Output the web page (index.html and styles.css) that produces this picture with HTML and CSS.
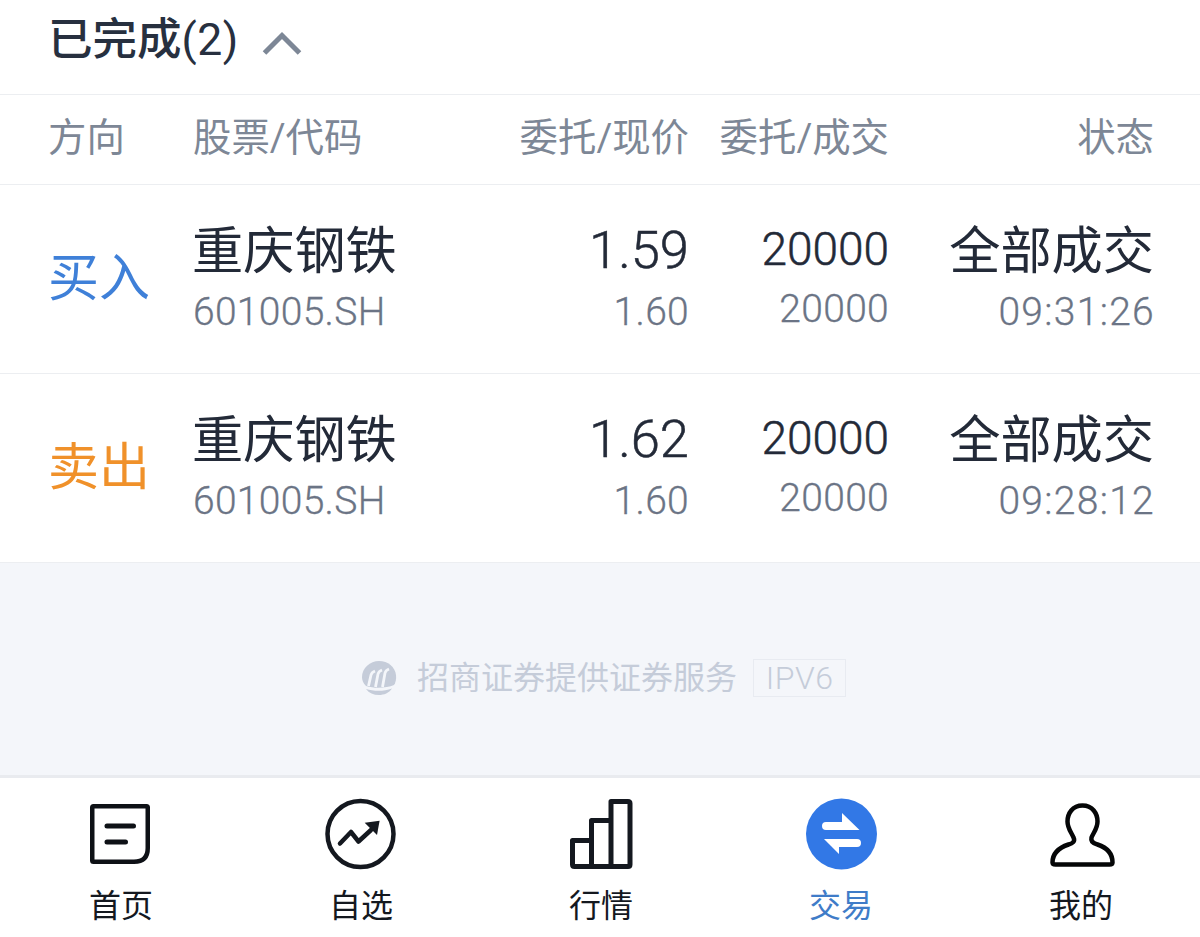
FILE: index.html
```html
<!DOCTYPE html>
<html lang="zh-CN">
<head>
<meta charset="utf-8">
<title>已完成</title>
<link rel="stylesheet" href="styles.css">
</head>
<body>
<div class="page">
  <main class="content">
    <header class="title-row">
      <h2 class="title">已完成<span class="count">(2)</span></h2>
      <svg class="chevron" viewBox="0 0 40 24" width="40" height="24"><path d="M2.500 22 L20 4.500 L37.500 22" fill="none" stroke="#7d8796" stroke-width="5"/></svg>
    </header>
    <div class="grid head-row">
      <span class="head-first">方向</span>
      <span>股票/代码</span>
      <span class="r">委托/现价</span>
      <span class="r">委托/成交</span>
      <span class="r">状态</span>
    </div>
    <div class="grid order-row">
      <div class="dir buy">买入</div>
      <div class="cell"><div class="name">重庆钢铁</div><div class="sub">601005.SH</div></div>
      <div class="cell r"><div class="price">1.59</div><div class="sub">1.60</div></div>
      <div class="cell r"><div class="qty">20000</div><div class="sub">20000</div></div>
      <div class="cell r"><div class="name">全部成交</div><div class="sub time">09:31:26</div></div>
    </div>
    <div class="grid order-row">
      <div class="dir sell">卖出</div>
      <div class="cell"><div class="name">重庆钢铁</div><div class="sub">601005.SH</div></div>
      <div class="cell r"><div class="price">1.62</div><div class="sub">1.60</div></div>
      <div class="cell r"><div class="qty">20000</div><div class="sub">20000</div></div>
      <div class="cell r"><div class="name">全部成交</div><div class="sub time">09:28:12</div></div>
    </div>
    <footer class="provider">
      <svg class="logo" viewBox="0 0 36 36" width="36" height="36">
        <path d="M18 1 C27 1 34 7 35 15 C35.500 19 34.500 23 33 25 C26 28 14 29 5 26 C2 23 1 20 1 17 C1 8 9 1 18 1 Z" fill="#c5ccd9"/>
        <path d="M5 29 C13 31.500 23 31.500 31 28.500 C28 33 23 35 18 35 C12.500 35 8 33 5 29 Z" fill="#c5ccd9"/>
        <path d="M7.500 26 L10 15 C10.500 13 11.500 12 14 11 M14.500 27 L17 14 C17.500 12 18.500 11 21 10 M21.500 27 L24 13 C24.500 11 25.500 10 28 9" fill="none" stroke="#f4f6fa" stroke-width="2.800"/>
      </svg>
      <span class="provider-text">招商证券提供证券服务</span>
      <span class="ipv">IPV6</span>
    </footer>
  </main>
  <nav class="tabs">
    <a class="tab">
      <svg viewBox="0 0 72 72" width="72" height="72"><path d="M7.250 9.500 Q7.250 8.250 8.500 8.250 H61.500 Q62.750 8.250 62.750 9.500 V50 Q62.750 63.750 49 63.750 H8.500 Q7.250 63.750 7.250 62.500 Z" fill="none" stroke="#0e1116" stroke-width="4.500"/><path d="M22 28 H48.500 M22 44 H40.500" stroke="#0e1116" stroke-width="5" stroke-linecap="round"/></svg>
      <span>首页</span>
    </a>
    <a class="tab">
      <svg viewBox="0 0 72 72" width="72" height="72"><circle cx="35.500" cy="36" r="33" fill="none" stroke="#14181f" stroke-width="4.500"/><path d="M15 45.500 L26 34 L33.500 43.500 L46 32" fill="none" stroke="#14181f" stroke-width="4.500" stroke-linecap="round" stroke-linejoin="round"/><path d="M39.700 24.700 L54.600 22.700 L52 37 Z" fill="#14181f"/></svg>
      <span>自选</span>
    </a>
    <a class="tab">
      <svg viewBox="0 0 72 72" width="72" height="72"><path d="M7.500 42.500 H26.500 V22.500 H46 V3.500 H63 Q65 3.500 65 5.500 V66.500 Q65 68.500 63 68.500 H9.500 Q7.500 68.500 7.500 66.500 Z M26.500 42.500 V68.500 M46 22.500 V68.500" fill="none" stroke="#14181f" stroke-width="5" stroke-linejoin="round"/></svg>
      <span>行情</span>
    </a>
    <a class="tab active">
      <svg viewBox="0 0 72 72" width="72" height="72"><circle cx="36.500" cy="36" r="35.500" fill="#3278e6"/><path d="M21 24 H37 V15 L54.500 32 H21 A4 4 0 0 1 21 24 Z" fill="#fff"/><path d="M19 41 H52 A4 4 0 0 1 52 49 H34 V56 Z" fill="#fff"/></svg>
      <span>交易</span>
    </a>
    <a class="tab">
      <svg viewBox="0 0 72 72" width="72" height="72"><path transform="translate(1.500 1.500)" d="M36 6 C46 6 51 14 51 22 C51 29 47 33 45 38 C44 42 47 44 51 45 C60 48 66 54 66 63 Q66 65 63 65 H9 Q6 65 6 63 C6 54 13 48 22 45 C26 44 29 42 27 38 C25 33 21 29 21 22 C21 14 26 6 36 6 Z" fill="none" stroke="#050607" stroke-width="4.500" stroke-linejoin="round"/></svg>
      <span>我的</span>
    </a>
  </nav>
</div>
</body>
</html>
```
FILE: styles.css
```css
* { box-sizing: border-box; }
html, body { margin: 0; padding: 0; }
body {
  width: 1200px;
  height: 937px;
  overflow: hidden;
  background: #fff;
  font-family: Roboto, "Noto Sans CJK SC", sans-serif;
}
.page { height: 937px; display: flex; flex-direction: column; }
.content { flex: 1; display: flex; flex-direction: column; background: #f4f6fa; min-height: 0; }
.title-row {
  height: 95px;
  flex: none;
  padding: 0 0 15px 48px;
  display: flex;
  align-items: center;
  gap: 23px;
  background: #fff;
  border-bottom: 1px solid #eceef1;
}
.title { margin: 0; font-size: 44.500px; line-height: 60px; font-weight: 500; color: #27303f; }
.count { font-weight: 400; letter-spacing: 0.5px; }
.chevron { flex: none; margin-top: 6px; }
.grid {
  display: grid;
  grid-template-columns: 143px 296px 200px 200px 265px;
  padding-left: 50px;
  background: #fff;
  border-bottom: 1px solid #eceef1;
  flex: none;
}
.head-row {
  height: 90px;
  padding-bottom: 3px;
  align-items: center;
  font-size: 38.400px;
  color: #7d8796;
}
.head-first { margin-left: -2px; }
.head-row span { line-height: 50px; white-space: nowrap; }
.r { text-align: right; }
.order-row { height: 189px; align-items: center; }
.dir { font-size: 51px; line-height: 60px; margin-left: -2px; }
.buy { color: #3f80d8; }
.sell { color: #f0912a; }
.cell { display: flex; flex-direction: column; padding-bottom: 5px; }
.name { font-size: 51.200px; line-height: 70px; color: #232a38; white-space: nowrap; margin-left: -1px; }
.price { font-size: 52.500px; line-height: 66px; margin-bottom: 4px; color: #232a38; font-weight: 300; -webkit-text-stroke: 0.5px #232a38; }
.qty { font-size: 46px; line-height: 61px; margin-bottom: 4px; color: #232a38; font-weight: 300; -webkit-text-stroke: 0.5px #232a38; }
.sub { font-size: 39px; line-height: 50px; color: #6b7485; font-weight: 300; letter-spacing: 0.300px; -webkit-text-stroke: 0.3px #6b7485; white-space: nowrap; }
.time { letter-spacing: 1.300px; margin-right: -1px; }
.provider {
  flex: 1;
  display: flex;
  align-items: center;
  padding: 18px 0 0 361px;
  color: #c5ccd9;
}
.logo { flex: none; margin-right: 20px; }
.provider-text { font-size: 32px; line-height: 44px; }
.ipv {
  margin-left: 16px;
  width: 93px;
  height: 38px;
  border: 1px solid #e8ebf1;
  font-size: 32px;
  font-weight: 300;
  letter-spacing: 0.500px;
  line-height: 36px;
  text-align: center;
}
.tabs {
  flex: none;
  height: 162px;
  display: grid;
  grid-template-columns: repeat(5, 240px);
  padding-left: 1px;
  background: #fff;
  border-top: 3px solid #e9ebef;
}
.tab {
  display: flex;
  flex-direction: column;
  align-items: center;
  padding-top: 20px;
  font-size: 32px;
  line-height: 42px;
  color: #14181f;
}
.tab svg { display: block; margin-bottom: 15px; }
.tab.active { color: #3f7cc8; }
```
